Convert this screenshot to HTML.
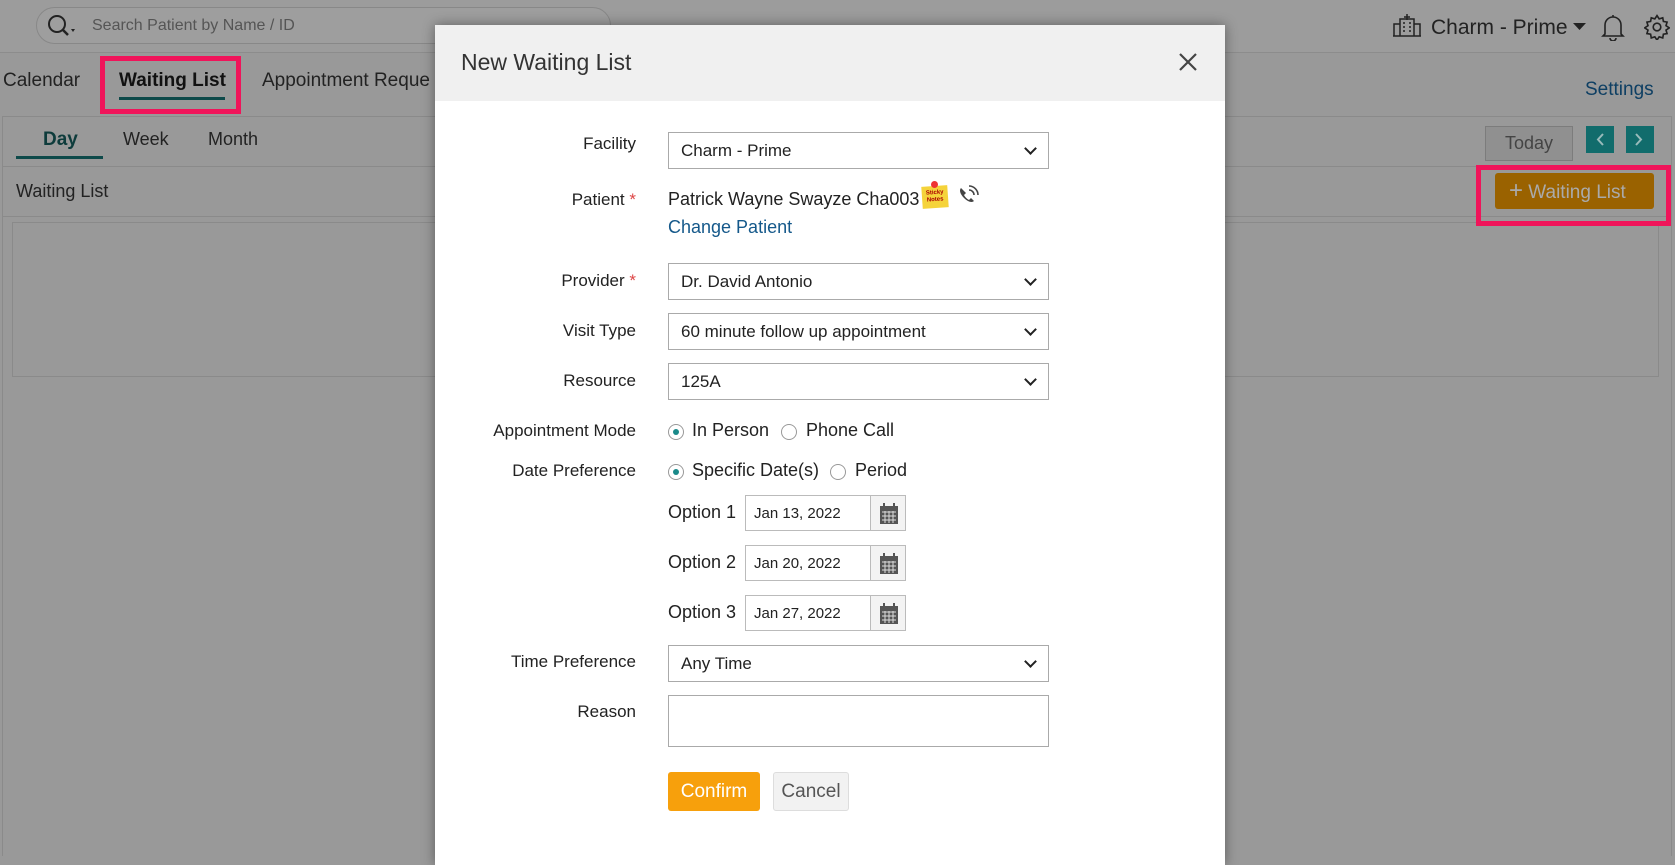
<!DOCTYPE html>
<html style="background:#999"><head><meta charset="utf-8">
<style>
*{box-sizing:border-box;margin:0;padding:0}
body{width:1675px;height:855px;overflow:hidden;background:#999;font-family:"Liberation Sans",sans-serif;position:relative;color:#222}
.a{position:absolute}
.bg{left:0;top:0;width:1675px;height:855px;background:#999}
.top{left:0;top:0;width:1675px;height:53px;background:#9c9c9c;border-bottom:1px solid #8c8c8c}
.search{left:36px;top:7px;width:575px;height:37px;border:1px solid #888;border-radius:19px;background:#9e9e9e}
.t{white-space:nowrap}
.modal{left:435px;top:25px;width:790px;height:840px;background:#fff;box-shadow:0 0 12px rgba(0,0,0,.4)}
.mh{left:0;top:0;width:790px;height:76px;background:#f0f0f0}
.lbl{right:1039px;font-size:17px;color:#222;text-align:right;white-space:nowrap}
.sel{left:668px;width:381px;height:37px;border:1px solid #aaa;background:#fff;font-size:17px;padding:8px 12px;color:#222}
.sel:after{content:"";position:absolute;right:13px;top:11px;width:7px;height:7px;border-right:2px solid #222;border-bottom:2px solid #222;transform:rotate(45deg)}
.rad{width:16px;height:16px;border:1px solid #999;border-radius:50%;background:#fff}
.rad.on:after{content:"";position:absolute;left:4px;top:4px;width:6px;height:6px;border-radius:50%;background:#1a8a8a}
.date{left:745px;width:161px;height:36px;border:1px solid #bbb;background:#fff;font-size:15px}
.date span{position:absolute;left:8px;top:9px}
.date i{position:absolute;right:0;top:0;width:35px;height:34px;background:#f3f3f3;border-left:1px solid #bbb}
</style></head><body>
<div class="a bg"></div>
<div class="a top"></div>
<div class="a search"></div>
<svg class="a" style="left:46px;top:12px" width="32" height="28" viewBox="0 0 32 28"><circle cx="11" cy="12" r="8" fill="none" stroke="#222" stroke-width="2"/><line x1="17" y1="18" x2="22" y2="23" stroke="#222" stroke-width="2.5"/><path d="M25 17l4 0-2 3z" fill="#222"/></svg>
<div class="a t" style="left:92px;top:17px;font-size:16px;color:#555">Search Patient by Name / ID</div>
<svg class="a" style="left:1392px;top:12px" width="30" height="26" viewBox="0 0 30 26" fill="none" stroke="#222" stroke-width="1.5"><path d="M8 24V7h14v17M2 24V12h6M22 12h6v12M1 24h28M15 2v6M12 5h6"/><path d="M11 11h2M17 11h2M11 15h2M17 15h2M11 19h2M17 19h2"/></svg>
<div class="a t" style="left:1431px;top:16px;font-size:21px;color:#222">Charm - Prime</div>
<svg class="a" style="left:1573px;top:23px" width="14" height="8"><path d="M0 0h13L6.5 7z" fill="#222"/></svg>
<svg class="a" style="left:1601px;top:13px" width="24" height="28" viewBox="0 0 24 28" fill="none" stroke="#222" stroke-width="1.6"><path d="M4 21V12a8 8 0 0 1 16 0v9l2 2H2z M12 2v2M9 25a3 3 0 0 0 6 0"/></svg>
<svg class="a" style="left:1644px;top:14px" width="26" height="26" viewBox="0 0 24 24" fill="none" stroke="#222" stroke-width="1.5"><circle cx="12" cy="12" r="3.5"/><path d="M12 1.5l2 3 3.3-1 .6 3.4 3.4.6-1 3.3 3 2-3 2 1 3.3-3.4.6-.6 3.4-3.3-1-2 3-2-3-3.3 1-.6-3.4-3.4-.6 1-3.3-3-2 3-2-1-3.3 3.4-.6.6-3.4 3.3 1z"/></svg>

<div class="a t" style="left:3px;top:70px;font-size:19px;color:#222">Calendar</div>
<div class="a t" style="left:119px;top:70px;font-size:19px;font-weight:bold;color:#111">Waiting List</div>
<div class="a" style="left:119px;top:97px;width:106px;height:3px;background:#0e4a4a"></div>
<div class="a" style="left:100px;top:56px;width:141px;height:58px;border:5px solid #f0145a"></div>
<div class="a t" style="left:262px;top:70px;font-size:19px;color:#222">Appointment Reque</div>
<div class="a t" style="left:1585px;top:79px;font-size:19px;color:#0e3f63">Settings</div>

<div class="a" style="left:2px;top:116px;width:1670px;height:740px;border:1px solid #8a8a8a;border-bottom:none"></div>
<div class="a t" style="left:43px;top:129px;font-size:19px;font-weight:bold;color:#0e3c3c">Day</div>
<div class="a" style="left:16px;top:156px;width:87px;height:3px;background:#0e4a4a"></div>
<div class="a t" style="left:123px;top:129px;font-size:18px">Week</div>
<div class="a t" style="left:208px;top:129px;font-size:18px">Month</div>
<div class="a" style="left:3px;top:166px;width:1668px;height:1px;background:#8a8a8a"></div>
<div class="a t" style="left:16px;top:181px;font-size:18px">Waiting List</div>
<div class="a" style="left:3px;top:216px;width:1668px;height:1px;background:#8a8a8a"></div>
<div class="a" style="left:12px;top:222px;width:1647px;height:155px;border:1px solid #8a8a8a"></div>
<div class="a t" style="left:1485px;top:126px;width:88px;height:35px;background:#909090;border:1px solid #7c7c7c;font-size:18px;color:#444;text-align:center;line-height:33px">Today</div>
<div class="a" style="left:1586px;top:126px;width:28px;height:27px;background:#116c6c"></div>
<div class="a" style="left:1626px;top:126px;width:28px;height:27px;background:#116c6c"></div>
<svg class="a" style="left:1586px;top:126px" width="68" height="27"><path d="M17 8l-5 5.5 5 5.5" stroke="#9bb" stroke-width="2" fill="none"/><path d="M50 8l5 5.5-5 5.5" stroke="#9bb" stroke-width="2" fill="none"/></svg>
<div class="a t" style="left:1495px;top:173px;width:159px;height:36px;background:#9a6200;border-radius:3px;font-size:19px;color:#aaa;line-height:36px;padding-left:14px"><b style="font-size:24px;font-weight:normal">+</b> Waiting List</div>
<div class="a" style="left:1476px;top:165px;width:195px;height:61px;border:5px solid #f0145a"></div>

<div class="a modal">
 <div class="a mh"></div>
 <div class="a t" style="left:26px;top:24px;font-size:23px;color:#333">New Waiting List</div>
 <svg class="a" style="left:743px;top:27px" width="20" height="20"><path d="M2 2l16 16M18 2L2 18" stroke="#444" stroke-width="2.2"/></svg>
</div>

<div class="a lbl" style="top:134px">Facility</div>
<div class="a sel" style="top:132px">Charm - Prime</div>
<div class="a lbl" style="top:190px">Patient <span style="color:#d44">*</span></div>
<div class="a t" style="left:668px;top:189px;font-size:18px">Patrick Wayne Swayze Cha003</div>
<div class="a" style="left:922px;top:186px;width:26px;height:22px;background:#f5d33a;transform:rotate(-4deg);font-size:6px;color:#a00;text-align:center;line-height:7px;padding-top:4px;font-weight:bold">Sticky<br>Notes</div>
<div class="a" style="left:931px;top:181px;width:7px;height:7px;border-radius:50%;background:#e33"></div>
<svg class="a" style="left:957px;top:185px" width="22" height="22" viewBox="0 0 22 22"><path d="M4 3c-2 2-1 6 3 10s8 5 10 3l-3-3-2 2c-2-1-4-3-5-5l2-2z" fill="#444"/><path d="M12 5a5 5 0 0 1 5 5M12 1a9 9 0 0 1 9 9" stroke="#444" stroke-width="1.6" fill="none"/></svg>
<div class="a t" style="left:668px;top:217px;font-size:18px;color:#14588a">Change Patient</div>

<div class="a lbl" style="top:271px">Provider <span style="color:#d44">*</span></div>
<div class="a sel" style="top:263px">Dr. David Antonio</div>
<div class="a lbl" style="top:321px">Visit Type</div>
<div class="a sel" style="top:313px">60 minute follow up appointment</div>
<div class="a lbl" style="top:371px">Resource</div>
<div class="a sel" style="top:363px">125A</div>
<div class="a lbl" style="top:421px">Appointment Mode</div>
<div class="a rad on" style="left:668px;top:424px"></div>
<div class="a t" style="left:692px;top:420px;font-size:18px">In Person</div>
<div class="a rad" style="left:781px;top:424px"></div>
<div class="a t" style="left:806px;top:420px;font-size:18px">Phone Call</div>
<div class="a lbl" style="top:461px">Date Preference</div>
<div class="a rad on" style="left:668px;top:464px"></div>
<div class="a t" style="left:692px;top:460px;font-size:18px">Specific Date(s)</div>
<div class="a rad" style="left:830px;top:464px"></div>
<div class="a t" style="left:855px;top:460px;font-size:18px">Period</div>

<div class="a t" style="left:668px;top:502px;font-size:18px">Option 1</div>
<div class="a date" style="top:495px"><span>Jan 13, 2022</span><i></i></div>
<div class="a t" style="left:668px;top:552px;font-size:18px">Option 2</div>
<div class="a date" style="top:545px"><span>Jan 20, 2022</span><i></i></div>
<div class="a t" style="left:668px;top:602px;font-size:18px">Option 3</div>
<div class="a date" style="top:595px"><span>Jan 27, 2022</span><i></i></div>
<svg class="a" style="left:879px;top:503px" width="20" height="122"><defs><g id="c"><rect x="1" y="3" width="18" height="18" fill="#555"/><rect x="4" y="0" width="2" height="4" fill="#555"/><rect x="14" y="0" width="2" height="4" fill="#555"/><path d="M3 9h14M3 13h14M3 17h14M6 8v12M10 8v12M14 8v12" stroke="#ddd" stroke-width="1"/></g></defs><use href="#c"/><use href="#c" y="50"/><use href="#c" y="100"/></svg>

<div class="a lbl" style="top:652px">Time Preference</div>
<div class="a sel" style="top:645px">Any Time</div>
<div class="a lbl" style="top:702px">Reason</div>
<div class="a" style="left:668px;top:695px;width:381px;height:52px;border:1px solid #aaa"></div>
<div class="a t" style="left:668px;top:772px;width:92px;height:39px;background:#f7a00c;border-radius:3px;color:#fff;font-size:19px;text-align:center;line-height:39px">Confirm</div>
<div class="a t" style="left:773px;top:772px;width:76px;height:39px;background:#f2f2f2;border:1px solid #ddd;border-radius:3px;color:#555;font-size:19px;text-align:center;line-height:37px">Cancel</div>
</body></html>
